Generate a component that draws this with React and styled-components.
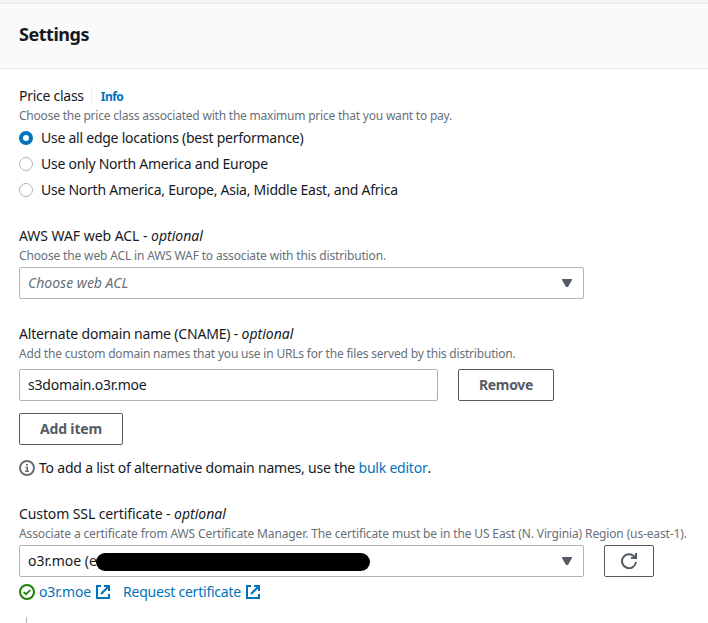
import React from 'react';
import styled, { createGlobalStyle } from 'styled-components';

const Global = createGlobalStyle`
  * { box-sizing: border-box; }
  body {
    margin: 0;
    background: #fff;
    color: #16191f;
    font: 400 14px/22px "Noto Sans", sans-serif;
  }
`;

const Page = styled.div`
  height: 623px;
  overflow: hidden;
  border-top: 3px solid #f2f3f3;
`;
const Header = styled.header`
  height: 66px;
  padding: 19px 19px 0;
  background: #fafafa;
  border-top: 1px solid #eaeded;
  border-bottom: 1px solid #eaeded;
`;
const Title = styled.h2`
  margin: 0;
  font-size: 18px;
  line-height: 22px;
  font-weight: 700;
  letter-spacing: -0.47px;
`;
const Body = styled.main`
  padding: 16px 0 0 19px;
`;
const Field = styled.section`
  margin-bottom: ${(p) => p.$gap || 0}px;
`;
const Text = styled.span`
  white-space: pre;
  letter-spacing: ${(p) => p.$ls || 0}px;
`;
const Label = styled.div`
  display: flex;
  height: 22px;
  white-space: pre;
`;
const Optional = styled.em`
  letter-spacing: 0.02px;
`;
const Info = styled.a`
  height: 18px;
  margin: 2px 0 0 7px;
  padding-left: 9px;
  border-left: 1px solid #eaeded;
  color: #0073bb;
  font-size: 12px;
  font-weight: 700;
  line-height: 20px;
  letter-spacing: -0.5px;
`;
const Description = styled.div`
  height: 18px;
  color: #687078;
  font-size: 12px;
  line-height: 18px;
  white-space: nowrap;
  letter-spacing: ${(p) => p.$ls}px;
`;
const Option = styled.label`
  display: flex;
  align-items: center;
  height: 26px;
  gap: 8px;
`;
const Radio = styled.span`
  width: 14px;
  height: 14px;
  border-radius: 50%;
  background: #fff;
  border: ${(p) => (p.$on ? '4px solid #0073bb' : '1px solid #aab7b8')};
`;
const Controls = styled.div`
  display: flex;
  gap: 20px;
  margin-top: ${(p) => p.$top || 2}px;
`;
const Box = styled.div`
  display: flex;
  align-items: center;
  justify-content: space-between;
  width: ${(p) => p.$w}px;
  height: 32px;
  padding: 0 10px 0 8px;
  border: 1px solid #aab7b8;
  border-radius: 2px;
`;
const Placeholder = styled(Text)`
  color: #687078;
  font-style: italic;
`;
const Value = styled.span`
  display: flex;
  align-items: center;
`;
const Redaction = styled.span`
  width: 274px;
  height: 18px;
  margin: 2px 0 0 -1px;
  border-radius: 9px;
  background: #000;
`;
const Button = styled.button`
  display: flex;
  align-items: center;
  justify-content: center;
  width: ${(p) => p.$w}px;
  height: 32px;
  padding: 0;
  background: #fff;
  border: 1px solid #545b64;
  border-radius: 2px;
  color: #545b64;
  font: 700 14px/22px "Noto Sans", sans-serif;
  letter-spacing: ${(p) => p.$ls || 0}px;
`;
const AddButton = styled(Button)`
  margin-top: 12px;
`;
const Line = styled.div`
  display: flex;
  align-items: center;
  height: 22px;
  margin-top: ${(p) => p.$top}px;
`;
const Link = styled.a`
  display: flex;
  align-items: center;
  gap: 4px;
  margin-right: ${(p) => p.$after || 0}px;
  color: #0073bb;
  letter-spacing: ${(p) => p.$ls}px;
`;
const Icon = styled.svg`
  display: block;
  flex: none;
  width: 16px;
  height: 16px;
  margin-right: ${(p) => p.$after || 0}px;
  fill: none;
  stroke: ${(p) => p.$color};
  stroke-width: 2;
`;
const Caret = styled.svg`
  display: block;
  width: 12px;
  height: 10px;
  fill: #545b64;
`;
const NextBranch = styled.div`
  width: 1px;
  height: 20px;
  margin: 14px 0 0 7px;
  background: #aab7b8;
`;

const DownArrow = () => (
  <Caret viewBox="0 0 12 10">
    <path d="M1 1h10v1L7 9H5L1 2z" />
  </Caret>
);
const External = () => (
  <Icon viewBox="0 0 16 16" $color="#0073bb">
    <path d="M6 2H2v12h12v-4M9 2h5v5M14 2 6 10" />
  </Icon>
);

const priceClasses = [
  ['Use all edge locations (best performance)', -0.245],
  ['Use only North America and Europe', -0.26],
  ['Use North America, Europe, Asia, Middle East, and Africa', -0.25],
];

export default function App() {
  return (
    <Page>
      <Global />
      <Header>
        <Title>Settings</Title>
      </Header>
      <Body>
        <Field $gap={22}>
          <Label>
            <Text $ls={-0.27}>Price class</Text>
            <Info>Info</Info>
          </Label>
          <Description $ls={-0.215}>
            Choose the price class associated with the maximum price that you want to pay.
          </Description>
          {priceClasses.map(([name, ls], i) => (
            <Option key={name}>
              <Radio $on={i === 0} />
              <Text $ls={ls}>{name}</Text>
            </Option>
          ))}
        </Field>

        <Field $gap={24}>
          <Label>
            <Text $ls={-0.046}>{'AWS WAF web ACL - '}</Text>
            <Optional>optional</Optional>
          </Label>
          <Description $ls={-0.154}>
            Choose the web ACL in AWS WAF to associate with this distribution.
          </Description>
          <Controls>
            <Box $w={565}>
              <Placeholder $ls={0}>Choose web ACL</Placeholder>
              <DownArrow />
            </Box>
          </Controls>
        </Field>

        <Field $gap={24}>
          <Label>
            <Text $ls={-0.19}>{'Alternate domain name (CNAME) - '}</Text>
            <Optional>optional</Optional>
          </Label>
          <Description $ls={-0.191}>
            Add the custom domain names that you use in URLs for the files served by this distribution.
          </Description>
          <Controls $top={6}>
            <Box $w={419}>
              <Text $ls={-0.22}>s3domain.o3r.moe</Text>
            </Box>
            <Button $w={96} $ls={-0.35}>Remove</Button>
          </Controls>
          <AddButton $w={104} $ls={-0.16}>Add item</AddButton>
          <Line $top={12}>
            <Icon viewBox="0 0 16 16" $color="#687078" $after={4}>
              <circle cx="8" cy="8" r="7" />
              <path d="M7 4.75h2M6.5 7.5h1.75V11M6 11.25h4" strokeWidth="1.5" />
            </Icon>
            <Text $ls={-0.213}>{'To add a list of alternative domain names, use the '}</Text>
            <Link $ls={-0.219}>bulk editor</Link>.
          </Line>
        </Field>

        <Field>
          <Label>
            <Text $ls={-0.104}>{'Custom SSL certificate - '}</Text>
            <Optional>optional</Optional>
          </Label>
          <Description $ls={-0.133}>
            Associate a certificate from AWS Certificate Manager. The certificate must be in the US East (N. Virginia) Region (us-east-1).
          </Description>
          <Controls>
            <Box $w={565}>
              <Value>
                <Text>o3r.moe (e</Text>
                <Redaction />
              </Value>
              <DownArrow />
            </Box>
            <Button $w={50} aria-label="Refresh">
              <Icon viewBox="0 0 16 16" $color="#545b64">
                <path d="M15 9A7 7 0 1 1 12.8 3L14.5 4.7M10 5h5V0" />
              </Icon>
            </Button>
          </Controls>
          <Line $top={4}>
            <Icon viewBox="0 0 16 16" $color="#1d8102" $after={4}>
              <circle cx="8" cy="8" r="7" />
              <path d="M4.7 8 7 10.2 11.3 6" strokeWidth="1.7" />
            </Icon>
            <Link $ls={-0.175} $after={12}>
              o3r.moe
              <External />
            </Link>
            <Link $ls={-0.22}>
              Request certificate
              <External />
            </Link>
          </Line>
        </Field>
        <NextBranch />
      </Body>
    </Page>
  );
}
